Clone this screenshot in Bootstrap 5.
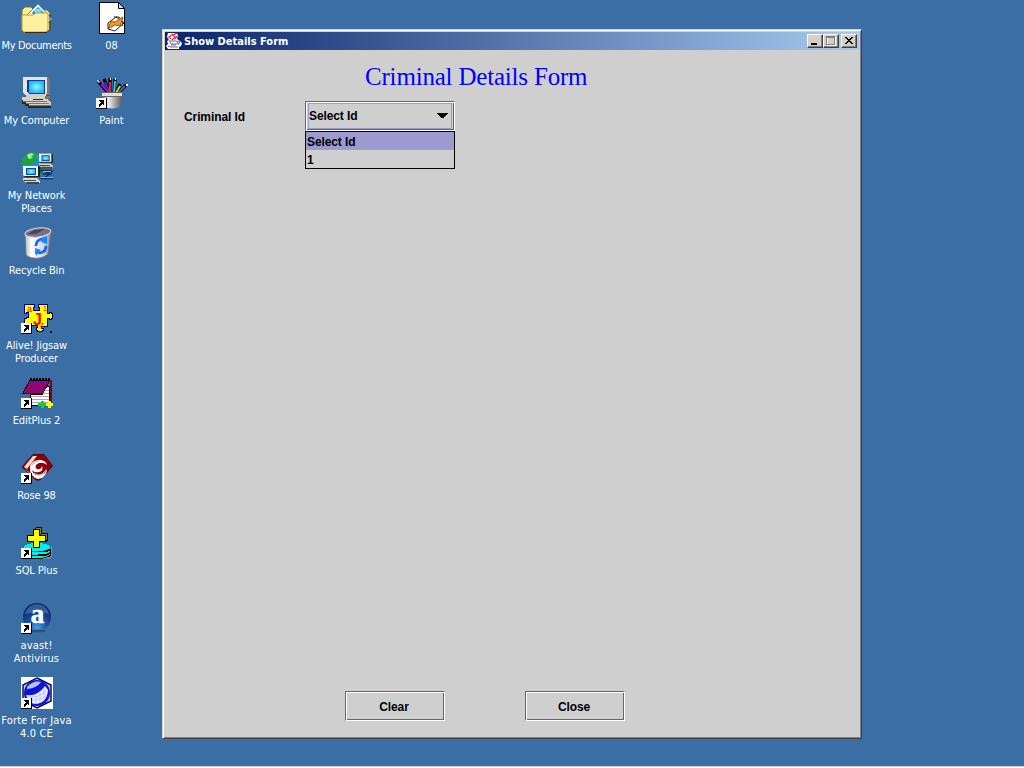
<!DOCTYPE html>
<html lang="en">
<head>
<meta charset="utf-8">
<meta name="viewport" content="width=device-width, initial-scale=1">
<title>Show Details Form</title>
<link href="https://cdn.jsdelivr.net/npm/bootstrap@5.3.0/dist/css/bootstrap.min.css" rel="stylesheet">
<style>
body{background:#3a6ea5;height:768px;font-family:"DejaVu Sans Condensed","DejaVu Sans",sans-serif;font-size:11px;line-height:13px;color:#000}
.desk{width:150px;padding-top:2px}
.desk-col{width:75px}
.shortcut{width:74px;height:75px;color:#fff;text-align:center;white-space:nowrap}
.shortcut svg{display:block;width:32px;height:32px;margin:0 auto 5px;shape-rendering:crispEdges;overflow:visible}
.shortcut svg.smooth{shape-rendering:auto}
.shortcut span{display:block;margin:0 -3px 0 -4px}
.tight{letter-spacing:-.32px}
.snug{letter-spacing:-.12px}
.loose{letter-spacing:.18px}
.win{width:700px;height:710px;margin:29px 0 0 12px;background:#cfcfcf;border:1px solid;border-color:#d4d0c8 #404040 #404040 #d4d0c8;box-shadow:inset 1px 1px #fff,inset -1px -1px #808080;padding:2px}
.title-strip{height:18px;background:linear-gradient(90deg,#0a246a,#a6caf0);color:#fff;padding:0 2px 0 1px;font-weight:700}
.title-strip svg{width:16px;height:16px;flex:none}
.title-text{padding-left:2px}
.sys{width:16px;height:14px;padding:0;border:1px solid;border-color:#fff #404040 #404040 #fff;box-shadow:inset -1px -1px #808080;background:#d4d0c8;border-radius:0;display:block}
.title-strip .sys svg{display:block;width:14px;height:12px;shape-rendering:crispEdges}
.work{height:686px;font-family:"Liberation Sans",Arial,sans-serif;font-weight:700;font-size:12px;line-height:18px;letter-spacing:-.1px}
.heading{font:400 25px/30px "Liberation Serif","Times New Roman",serif;letter-spacing:-.19px;color:#00f;margin:12px 0 0 200px;white-space:nowrap}
.etched{border:1px solid;border-color:#666 #fff #fff #666;box-shadow:inset 1px 1px #fff,inset -1px -1px #666;border-radius:0;background:#cfcfcf}
.field-row{margin-top:9px;padding-left:19px}
.field-label{width:121px;padding-top:7px}
.combo{width:150px;height:30px;padding:1px 2px}
.combo-in{height:26px;border:1px solid #9c9ace;padding:0 3px 0 0}
.combo-list{width:150px;height:38px;border:1px solid #000;background:#cfcfcf}
.combo-list div{height:18px;line-height:20px;padding-left:1px}
.combo-list .picked{background:#9c9ace}
.push{width:100px;height:30px;font:inherit;letter-spacing:inherit;padding:2px 2px 0 0}
.actions{gap:80px;padding-left:180px;padding-bottom:15px}
.task-edge{height:2px;background:#fff;border-top:1px solid #d4d0c8}
</style>
</head>
<body class="d-flex flex-column overflow-hidden">
<svg width="0" height="0" class="position-absolute"><defs>
<symbol id="arrow" viewBox="0 0 11 11"><path fill="#000" d="M0 0h11v11H0z"/><path fill="#fff" d="M0 0h10v10H0z"/><path fill="#000" d="M3 2h5v5H7V6H6v1H5v1H4v1H3V6h1V5h1V4H4V3H3z"/></symbol>
<linearGradient id="metal"><stop stop-color="#777"/><stop offset=".3" stop-color="#eee"/><stop offset="1" stop-color="#666"/></linearGradient>
<linearGradient id="bin"><stop stop-color="#bbb"/><stop offset=".25" stop-color="#fff"/><stop offset=".7" stop-color="#d8d8e4"/><stop offset="1" stop-color="#8888a0"/></linearGradient>
<radialGradient id="screen"><stop stop-color="#8ff"/><stop offset="1" stop-color="#28b4f8"/></radialGradient>
<radialGradient id="orb" cx=".5" cy=".9" r=".8"><stop stop-color="#4ba6e8"/><stop offset=".4" stop-color="#1c56a8"/><stop offset="1" stop-color="#0c2468"/></radialGradient>
<symbol id="pc" viewBox="0 0 32 32"><path fill="#e8e4dc" d="M2 0h24v18H4L2 15z"/><path fill="#777" d="M26 0h2l1 3v15H5v-1h21z"/><path fill="#004098" d="M6 3h18v14H8L6 15z"/><path fill="url(#screen)" d="M8 4h15v12H8z"/><path fill="#55506c" d="M6 18h23v4H6z"/><path fill="#d4d0c8" d="M5 17h20v3H5zM1 20h23l6 6v4H8L1 23z"/><path fill="#777" d="M2 24h24v1H2zM5 26h23v1H5zM8 28h22v3H8zM24 19h5v3h-5z"/><path fill="#302820" d="M1 23h1v2h3v2h3v2h22v2H7v-2H4v-2H1zM12 22h10v1H12z"/></symbol>
<symbol id="mini" viewBox="0 0 17 18"><path fill="#222" d="M1 0h15l1 1v10H2l-1-1z"/><path fill="#f4f0ea" d="M0 0h15v10H1L0 9z"/><path fill="#0048a8" d="M3 2h10v7H3z"/><path fill="url(#screen)" d="M4 3h8v5H4z"/><path fill="#555" d="M3 11h12v2H3z"/><path fill="#dcd8d0" d="M0 12h14l3 3v2H3l-3-3z"/><path fill="#444" d="M1 14h12v1H1zM3 16h13v2H4z"/></symbol>
</defs></svg>
<div class="d-flex flex-grow-1 align-items-start">
<nav class="desk d-flex">
<div class="desk-col">
 <div class="shortcut"><svg class="smooth" viewBox="0 0 32 32"><path fill="#f8f090" stroke="#807020" d="M1 29V8l3-3h6l3 3h13l3 3v16l-2 3H3z"/><path fill="#f5faff" stroke="#5294c8" d="M5 14 17 2l14 15-5 5z"/><path fill="#0878d0" d="m17 5 6 6-6 5-6-5z"/><circle cx="17" cy="10" r="3.500" fill="#78d8ff"/><path fill="#fff0a0" stroke="#c0a030" d="M1 13h11l3-2h12v16l-2 3H3l-2-2z"/><path stroke="#302c10" d="M4 30.500h22l3-3V12" fill="none"/></svg><span class="tight">My Documents</span></div>
 <div class="shortcut"><svg viewBox="0 0 32 32"><use href="#pc"/></svg><span class="snug">My Computer</span></div>
 <div class="shortcut"><svg class="smooth" viewBox="0 0 32 32"><circle cx="11" cy="11" r="10.500" fill="#1890e0"/><path fill="#20a040" d="M1 8 5 2l6-2 7 2-4 2 3 3-4 4-3 1-2 4-5-3-3-2z"/><path fill="#a0f090" d="m7 2 4-1 2 2-3 1 2 2-4 1-2-3z"/><path fill="#106820" d="m16 14 6 1-2 6-4-1z"/><path fill="none" stroke="#103060" stroke-width="1.300" d="M20 18.500h11M22 22h9M20 26.500h12M22 18l5 3 5-2M23 26l6-4"/><path fill="none" stroke="#6ac0f0" d="M20 25.500h12M22 19.500h8"/><use href="#mini" x="18" y="1" width="14" height="16"/><use href="#mini" x="2" y="14" width="17" height="18"/></svg><span class="snug">My Network<br>Places</span></div>
 <div class="shortcut"><svg class="smooth" viewBox="0 0 32 32"><path fill="url(#bin)" stroke="#777088" d="M4 8 5 28q4 4 14 3 5-1 8-4l3-22z"/><ellipse cx="17" cy="5.500" rx="13" ry="4.500" fill="#777084" stroke="#d8d8d8" transform="rotate(-7 17 6)"/><path fill="#48445c" d="m7 7 6-4 11-1-9 5z"/><path fill="none" stroke="#1668e8" stroke-width="2.700" d="M15 19q0-6 6-7l3 1M25 19q0 6-6 7l-5-1"/><path fill="#1688ff" d="m22 10 4-1v8l-6-2zM14 21l6 2-5 6z"/></svg><span class="snug">Recycle Bin</span></div>
 <div class="shortcut"><svg viewBox="0 0 32 32"><path fill="#ff0" stroke="#000080" d="M3.500 2.500h10v3h-1v3h6v-3h-1v-3h9v9h2v-1h2l1 2v3l-1 2h-2v-1h-2v8h-6v2h2v2l-2 1h-4l-1-2v-2h1v-2H3.500v-7h2v-1h2v-5h-2v1h-2z"/><g fill="#f00" font-family="Liberation Sans,sans-serif"><text x="6" y="9.500" font-size="9">a</text><text x="22" y="9" font-size="7">1</text><text x="12" y="23" font-size="16" font-weight="700">J</text><text x="19" y="25" font-size="8">z</text></g><path d="M29 29h2v2h-2z"/><use href="#arrow" y="21" width="11" height="11"/></svg><span class="snug">Alive! Jigsaw<br>Producer</span></div>
 <div class="shortcut"><svg viewBox="0 0 32 32"><path fill="#fff" stroke="#000" d="M9.500 9.500h19v19h-19z"/><path fill="#800020" d="M29 3h2v25h-2z"/><path stroke="#aaa" d="M10 19.500h18M10 22.500h18M10 25.500h18M23 13.500h5M22 16.500h6"/><path stroke="#000" d="M10 17.500h12"/><path fill="#b0004c" stroke="#300018" d="M9 3h20l-7 13H2z"/><path stroke="#6a1098" stroke-dasharray="1 1" d="M9 5.500h18M8 7.500h18M7 9.500h17M6 11.500h17M5 13.500h17"/><path stroke="#000" stroke-width="3" stroke-dasharray="2 1" d="M9 2.500h20"/><path fill="#00e020" d="M20 24h3v2h2v3h-2v2h-3v-2h-3v-3h3z"/><path fill="#ff0" d="M27 24h3v2h2v3h-2v2h-3v-2h-2v-3h2z"/><use href="#arrow" y="21" width="11" height="11"/></svg><span class="snug">EditPlus 2</span></div>
 <div class="shortcut"><svg class="smooth" viewBox="0 0 32 32"><path fill="#8c0008" stroke="#600008" d="M12 2.500h11L31.500 14 19 28h-4L1 15z"/><path fill="#f6dcc0" d="M3 15 12 4h4L6 17z"/><path fill="#907030" d="m3 17 3 1 12 9h-3z"/><path fill="#fff" d="M9 14Q12 7 20 8q5 1 6 5-5-4-10-1-3 3 0 5 4 1 5-3 2 5-3 6-5 1-7-2 1 6 8 5 5-1 7-6 0 5-5 9l-4 1Q8 24 9 14z"/><path fill="none" stroke="#e8a8a8" d="M11 13q2-4 7-4M13 21q6 5 12-3"/><use href="#arrow" y="21" width="11" height="11"/></svg><span class="snug">Rose 98</span></div>
 <div class="shortcut"><svg viewBox="0 0 32 32"><path fill="#888" d="M29 19h2v11l-3 2h-6z"/><ellipse cx="16" cy="27" rx="14" ry="4.500" fill="#0ee" stroke="#000"/><ellipse cx="16" cy="24" rx="14" ry="4.500" fill="#0ee" stroke="#000"/><ellipse cx="16" cy="20" rx="14" ry="4.500" fill="#0ee" stroke="#089"/><path stroke="#000" stroke-width="1.500" d="M17 24.500h8l4-2M17 28h8l4-2" fill="none"/><path fill="#880" stroke="#000" d="m14.500 1.500 1-1h5v6h6v7l-2 1z"/><path fill="#ff0" stroke="#000" d="M12.500 2.500h6v6h6v6h-6v6h-6v-6h-6v-6h6z"/><use href="#arrow" y="21" width="11" height="11"/></svg><span class="snug">SQL Plus</span></div>
 <div class="shortcut"><svg class="smooth" viewBox="0 0 32 32"><circle cx="16" cy="15" r="14" fill="url(#orb)"/><ellipse cx="16" cy="29" rx="9" ry="1.500" fill="#305070"/><path fill="#5d8bc8" opacity=".5" d="M4 12Q7 2 16 2t12 10q-12-3-24 0z"/><text x="16.500" y="21" text-anchor="middle" font-family="Liberation Serif,serif" font-weight="700" font-size="27" fill="#fff" stroke="#fff" stroke-width=".5">a</text><use href="#arrow" y="21" width="11" height="11"/></svg><span class="loose">avast!<br>Antivirus</span></div>
 <div class="shortcut"><svg class="smooth" viewBox="0 0 32 32"><path fill="#fff" d="M0 0h32v32H0z"/><path fill="#c8ccf0" stroke="#101050" stroke-width="1.500" d="m16 1 14 7v16l-14 7-14-7V8z"/><circle cx="16" cy="16" r="13" fill="#1014d8"/><path fill="#e8ecff" d="M5 18q11 2 19-9l3 4q-1 13-12 14-7 0-10-9z"/><path stroke="#a8b0f0" stroke-width=".6" fill="none" d="M6 20q12 2 20-7M8 23q11 1 18-5M11 18v8m4-9v10m4-12v11m4-15v12"/><path fill="#b8c0ff" d="M6 10q7-7 14-5-4 6-14 7z"/><use href="#arrow" y="21" width="11" height="11"/></svg><span class="loose">Forte For Java<br>4.0 CE</span></div>
</div>
<div class="desk-col">
 <div class="shortcut"><svg class="smooth" viewBox="0 0 32 32"><path fill="#fff" stroke="#000" d="M3.500.5h19l6 6v25h-25z"/><path fill="#ddd" stroke="#000" d="M22.500.5v6h6z"/><path fill="none" stroke="#222" d="m12 21 8-6 8 6-9 8-7-2zM18 15h5l4 5-1 4"/><path fill="#ff9810" stroke="#804000" stroke-width=".8" d="m12 27 3-8 4 1 8-5-3 9-5-1z"/></svg><span>08</span></div>
 <div class="shortcut"><svg class="smooth" viewBox="0 0 32 32"><g stroke="#000" stroke-width="3.200"><path d="m2 4 10 12M8 2l6 14M14 1v15M19 2l-1 14M24 7l-4 9M30 8l-8 8"/></g><g stroke-width="2"><path stroke="#c000d0" d="m5 7 8 9"/><path stroke="#4030d0" d="m9 5 5 11"/><path stroke="#f02020" d="M14 5v11"/><path stroke="#20d0e0" d="m19 4-1 12"/><path stroke="#e0d000" d="m24 9-4 7"/><path stroke="#2868e0" d="m29 9-7 7"/></g><path fill="#fff" d="m2 3 2 2-1 1-2-2zm12-2h1v2h-1zm5 0h1v2h-1zm11 6h2v2h-2z"/><path fill="url(#metal)" d="M7 16h18v13q-9 5-18 0z"/><path fill="#ddd" stroke="#666" d="M5.500 15.500h21v4h-21z"/><use href="#arrow" y="21" width="11" height="11"/></svg><span>Paint</span></div>
</div>
</nav>
<main class="win">
<header class="title-strip d-flex align-items-center">
 <svg viewBox="0 0 16 16"><path fill="#fff" d="M2 0h9l1 3-1 3 3 2 2 2-1 3-2 1v2H2l-2-3 2-2-1-3 2-1-2-3z"/><path fill="none" stroke="#e83848" stroke-width="1.500" d="m5 6-2-2 4-3m-1 6 3-3-2-2 4-2M9 6l2-3"/><path fill="none" stroke="#6068a8" d="M3 8h7l2 1v1l-2 1M4 9l1 2h5M2 13l3 1h7M5 12h5M12 8l2 1-2 3"/></svg>
 <span class="flex-grow-1 title-text">Show Details Form</span>
 <button class="sys" aria-label="Minimize"><svg viewBox="0 0 14 12"><path d="M3 8h6v2H3z"/></svg></button>
 <button class="sys" aria-label="Maximize"><svg viewBox="0 0 14 12"><path fill="none" stroke="#fff" d="M3.500 2.500h8v8h-8z"/><path fill="none" stroke="#808080" d="M2.500 1.500h8v8h-8zM2 2.500h9"/></svg></button>
 <button class="sys ms-auto" style="margin-left:2px!important" aria-label="Close window"><svg viewBox="0 0 14 12"><path d="M3 2h2v1h1v1h2V3h1V2h2v1h-1v1H9v1H8v1h1v1h1v1h1v1H9V8H8V7H6v1H5v1H3V8h1V7h1V6h1V5H5V4H4V3H3z"/></svg></button>
</header>
<section class="work d-flex flex-column">
 <h1 class="heading">Criminal Details Form</h1>
 <div class="field-row d-flex align-items-start">
  <div class="field-label">Criminal Id</div>
  <div>
   <div class="combo etched"><div class="combo-in d-flex align-items-center justify-content-between"><span>Select Id</span><svg width="11" height="6" shape-rendering="crispEdges"><path d="M0 0h11v1h-1v1H9v1H8v1H7v1H4V4H3V3H2V2H1V1H0z"/></svg></div></div>
   <div class="combo-list"><div class="picked">Select Id</div><div>1</div></div>
  </div>
 </div>
 <div class="actions d-flex mt-auto"><button class="push etched">Clear</button><button class="push etched">Close</button></div>
</section>
</main>
</div>
<footer class="task-edge"></footer>
<script src="https://cdn.jsdelivr.net/npm/bootstrap@5.3.0/dist/js/bootstrap.bundle.min.js"></script>
</body>
</html>
